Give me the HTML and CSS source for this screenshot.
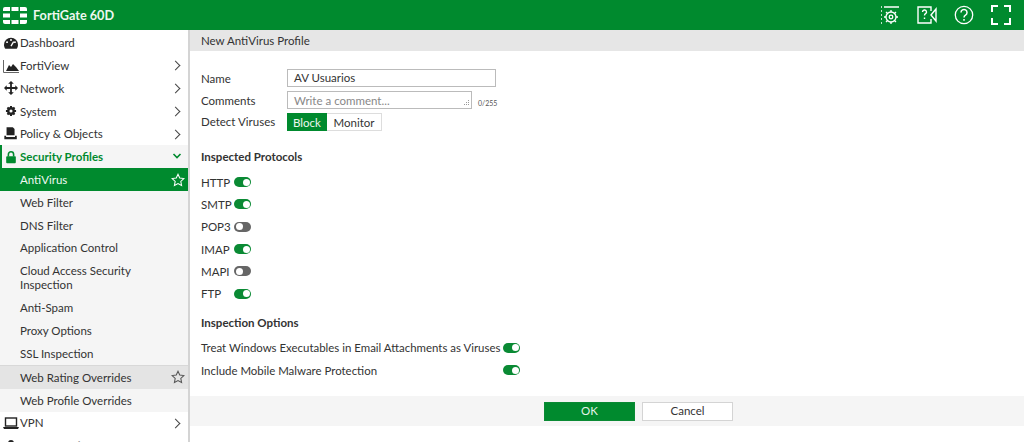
FILE: index.html
```html
<!DOCTYPE html>
<html lang="en">
<head>
<meta charset="utf-8">
<title>FortiGate 60D</title>
<link rel="stylesheet" href="styles.css">
</head>
<body>
<header class="topbar">
  <div class="brand">
    <svg class="logo" viewBox="0 0 24 17" width="24" height="17"><g fill="#fff"><path d="M7 0v4H0V2a2 2 0 0 1 2-2z"/><rect x="8.5" y="0" width="7" height="4"/><path d="M17 0h5a2 2 0 0 1 2 2v2h-7z"/><rect x="0" y="6.5" width="7" height="4"/><rect x="17" y="6.5" width="7" height="4"/><path d="M0 13h7v4H2a2 2 0 0 1-2-2z"/><rect x="8.5" y="13" width="7" height="4"/><path d="M17 13h7v2a2 2 0 0 1-2 2h-5z"/></g></svg>
    <span class="brand-name">FortiGate 60D</span>
  </div>
  <div class="top-icons">
    <svg viewBox="0 0 20 20" width="20" height="20" fill="none" stroke="#fff" stroke-width="1.3"><path d="M1 2h1M4 2h15M1 6h1M1 10h1M1 14h1M1 18h1"/><circle cx="11" cy="12" r="5"/><circle cx="11" cy="12" r="1.8"/><path d="M11 5v2M11 17v2M4 12h2M16 12h2M6 7l1.500 1.500M16 7l-1.500 1.500M6 17l1.500-1.500M16 17l-1.500-1.500"/></svg>
    <svg viewBox="0 0 20 20" width="20" height="20" fill="none" stroke="#fff" stroke-width="1.4"><path d="M14 6V2H1v16h13v-4"/><path d="M14 10l5-6v12z"/><path d="M5.500 7a2 2 0 1 1 3 1.700c-.8.500-1 .8-1 1.800M7.500 12.500v1.500"/></svg>
    <svg viewBox="0 0 20 20" width="20" height="20" fill="none" stroke="#fff" stroke-width="1.300"><circle cx="10" cy="10" r="8.700"/><path d="M7 7.500a3 3 0 1 1 4.500 2.600c-1 .6-1.500 1.100-1.500 2.400M10 14v1.800" stroke-width="1.500"/></svg>
    <svg viewBox="0 0 20 20" width="20" height="20" fill="none" stroke="#fff" stroke-width="2"><path d="M1 7V1h6M13 1h6v6M19 13v6h-6M7 19H1v-6"/></svg>
  </div>
</header>
<div class="shell">
  <nav class="sidebar">
    <a class="nav-row"><svg class="nav-icon" viewBox="-1 -1 18 16"><path fill="#222" d="M8 1a8 8 0 0 0-8 8c0 2 .6 3.500 1.500 4.500h13c.9-1 1.500-2.500 1.500-4.500a8 8 0 0 0-8-8z"/><circle cx="8" cy="3.500" r="1.100" fill="#fff"/><circle cx="3.500" cy="6" r="1.100" fill="#fff"/><circle cx="12.500" cy="6" r="1.100" fill="#fff"/><path stroke="#fff" stroke-width="1.500" d="M8 10.500l3-5"/></svg><span>Dashboard</span></a>
    <a class="nav-row has-arrow"><svg class="nav-icon" viewBox="0 0 16 14"><path fill="#222" d="M3 12l3-6 2 2 2-3 3 3 3 4z"/><path fill="none" stroke="#666" stroke-width="1" d="M.5 1v12.500H16"/></svg><span>FortiView</span></a>
    <a class="nav-row has-arrow"><svg class="nav-icon" viewBox="0 0 16 14"><path fill="#222" d="M8 0l2.800 2.800H8.900v3.300h3.400V4.200L15 7l-2.700 2.800V7.900H8.900v3.300h1.900L8 14l-2.800-2.800h1.900V7.900H3.700v1.900L1 7l2.700-2.800v1.900h3.400V2.800H5.200z"/></svg><span>Network</span></a>
    <a class="nav-row has-arrow"><svg class="nav-icon" viewBox="-2 -2 20 18"><circle cx="8" cy="7" r="3.500" fill="none" stroke="#222" stroke-width="3"/><path stroke="#222" stroke-width="2.600" d="M8 .500v3M8 10.500v3M1.500 7h3M11.500 7h3M3.400 2.400l2 2M10.600 9.600l2 2M3.400 11.600l2-2M10.600 4.400l2-2"/></svg><span>System</span></a>
    <a class="nav-row has-arrow"><svg class="nav-icon" viewBox="-1 0 18 15"><path fill="#222" d="M3 0h7l2 2v7H3z"/><path fill="#222" d="M.5 9.500h2V11h10V9.500h2v4H.5z"/></svg><span>Policy &amp; Objects</span></a>
    <a class="nav-row nav-open"><svg class="nav-icon" viewBox="-1 -1 18 16"><path fill="#008a2e" d="M3.500 6h9a1 1 0 0 1 1 1v6a1 1 0 0 1-1 1h-9a1 1 0 0 1-1-1V7a1 1 0 0 1 1-1z"/><path fill="none" stroke="#008a2e" stroke-width="1.800" d="M5 6.500V4a3 3 0 0 1 6 0v2.500"/></svg><span>Security Profiles</span><svg class="arrow" viewBox="0 0 10 10" width="10" height="10"><path d="M1.500 3l3.500 3.500L8.500 3" fill="none" stroke="#008a2e" stroke-width="1.600"/></svg></a>
    <a class="sub-row sub-active"><span>AntiVirus</span><svg class="star" viewBox="0 0 16 16" width="14" height="14"><path d="M8 1.500l2 4.300 4.700.6-3.500 3.200.9 4.700L8 12l-4.100 2.300.9-4.700L1.300 6.400 6 5.800z" fill="none" stroke="#fff" stroke-width="1.200"/></svg></a>
    <a class="sub-row"><span>Web Filter</span></a>
    <a class="sub-row"><span>DNS Filter</span></a>
    <a class="sub-row"><span>Application Control</span></a>
    <a class="sub-row sub-tall"><span>Cloud Access Security<br>Inspection</span></a>
    <a class="sub-row"><span>Anti-Spam</span></a>
    <a class="sub-row"><span>Proxy Options</span></a>
    <a class="sub-row"><span>SSL Inspection</span></a>
    <a class="sub-row sub-hover"><span>Web Rating Overrides</span><svg class="star" viewBox="0 0 16 16" width="14" height="14"><path d="M8 1.500l2 4.300 4.700.6-3.500 3.200.9 4.700L8 12l-4.100 2.300.9-4.700L1.300 6.400 6 5.800z" fill="none" stroke="#555" stroke-width="1.200"/></svg></a>
    <a class="sub-row"><span>Web Profile Overrides</span></a>
    <a class="nav-row has-arrow"><svg class="nav-icon" viewBox="0 0 16 14"><rect x="2.500" y="2" width="11" height="8" fill="none" stroke="#222" stroke-width="1.400"/><path fill="#222" d="M0 11h16l-1 2H1z"/></svg><span>VPN</span></a>
    <a class="nav-row nav-cut"><svg class="nav-icon" viewBox="0 0 16 14"><circle cx="8" cy="4" r="3" fill="#222"/><path fill="#222" d="M3 14c0-4 2-6 5-6s5 2 5 6z"/></svg><span>User &amp; Device</span></a>
  </nav>
  <main class="content">
    <h1 class="page-title">New AntiVirus Profile</h1>
    <form class="form">
      <div class="field name-row"><label>Name</label><div class="input name-input">AV Usuarios</div></div>
      <div class="field comment-row"><label>Comments</label><div class="input comment-input">Write a comment...<svg class="grip" viewBox="0 0 7 7" width="7" height="7"><path fill="#999" d="M5 0h1v1H5zM3 2h1v1H3zM5 2h1v1H5zM1 4h1v1H1zM3 4h1v1H3zM5 4h1v1H5z"/></svg></div><span class="counter">0/255</span></div>
      <div class="field detect-row"><label>Detect Viruses</label><div class="segmented"><span class="seg seg-on">Block</span><span class="seg">Monitor</span></div></div>
      <h2 class="section first-section">Inspected Protocols</h2>
      <div class="toggle-row"><span class="proto">HTTP</span><span class="toggle on"></span></div>
      <div class="toggle-row"><span class="proto">SMTP</span><span class="toggle on"></span></div>
      <div class="toggle-row"><span class="proto">POP3</span><span class="toggle off"></span></div>
      <div class="toggle-row"><span class="proto">IMAP</span><span class="toggle on"></span></div>
      <div class="toggle-row"><span class="proto">MAPI</span><span class="toggle off"></span></div>
      <div class="toggle-row"><span class="proto">FTP</span><span class="toggle on"></span></div>
      <h2 class="section second-section">Inspection Options</h2>
      <div class="toggle-row"><span class="option">Treat Windows Executables in Email Attachments as Viruses</span><span class="toggle on"></span></div>
      <div class="toggle-row"><span class="option">Include Mobile Malware Protection</span><span class="toggle on"></span></div>
    </form>
    <div class="footer-bar"><button class="btn btn-ok" type="button">OK</button><button class="btn btn-cancel" type="button">Cancel</button></div>
  </main>
</div>
</body>
</html>
```
FILE: styles.css
```css
* { box-sizing: border-box; }
html, body { margin: 0; height: 100%; overflow: hidden; }
body { font-family: Lato, "Open Sans", sans-serif; font-size: 11.5px; color: #333; background: #fff; }
.topbar { height: 30px; background: #008a2e; display: flex; align-items: center; justify-content: space-between; color: #fff; }
.brand { display: flex; align-items: center; padding-left: 3px; gap: 6px; }
.brand-name { font-size: 12.7px; font-weight: 700; color: #eef7f0; }
.top-icons { display: flex; gap: 17px; padding-right: 13px; }
.shell { display: flex; height: 412px; }
.sidebar { width: 190px; flex: none; border-right: 2px solid #d4d4d4; padding-top: 1.400px; overflow: hidden; }
.nav-row, .sub-row { display: flex; align-items: center; height: 22.8px; position: relative; color: #333; }
.nav-row { padding-left: 3px; }
.nav-icon { width: 16px; height: 14px; margin-right: 1px; flex: none; }
.has-arrow::after { content: ""; position: absolute; right: 9px; top: 8px; width: 6px; height: 6px; border-top: 1.500px solid #444; border-right: 1.500px solid #444; transform: rotate(45deg); }
.nav-open { background: #f5f5f5; color: #008a2e; font-weight: 700; border-left: 2px solid #008a2e; padding-left: 1px; }
.arrow { position: absolute; right: 6px; top: 6px; }
.sub-row { padding-left: 20px; background: #f5f5f5; justify-content: space-between; padding-right: 3px; }
.sub-active { background: #008a2e; color: #f0f8f2; }
.sub-hover { background: #e4e4e4; height: 24px; border-top: 1px solid #d8d8d8; }
.sub-tall { height: 37px; line-height: 14px; }
.nav-cut span { color: #999; }
.content { flex: 1; display: flex; flex-direction: column; }
.page-title { margin: 0; height: 21px; background: #e6e6e6; font-size: 11.5px; font-weight: 400; padding-left: 11px; line-height: 21px; color: #333; }
.form { height: 345px; padding: 17px 0 0 11px; }
.field { display: flex; align-items: center; }
.field label { width: 86px; flex: none; }
.input { border: 1px solid #bbb; display: flex; align-items: center; padding-left: 6px; height: 18px; position: relative; }
.name-row { height: 19px; }
.name-row label { padding-top: 2px; }
.name-input { width: 209px; color: #333; }
.comment-row { height: 18px; margin-top: 4px; }
.comment-input { width: 185px; color: #888; }
.grip { position: absolute; right: 1px; bottom: 1px; }
.counter { font-size: 7px; margin-left: 6px; margin-top: 6px; color: #555; }
.detect-row { height: 18px; margin-top: 4px; }
.detect-row label { padding-bottom: 2px; }
.segmented { display: flex; height: 18px; border: 1px solid #ddd; }
.seg { display: flex; align-items: center; color: #333; height: 16px; width: 54px; justify-content: center; }
.seg-on { background: #008a2e; color: #eef7f0; width: 40px; height: 18px; margin: -1px 0 -1px -1px; }
.section { margin: 0; font-size: 11.5px; font-weight: 700; color: #333; line-height: 14px; }
.first-section { margin-top: 19px; margin-bottom: 7px; }
.second-section { margin-top: 11px; margin-bottom: 7px; }
.toggle-row { display: flex; align-items: center; height: 22.300px; }
.proto { width: 33px; flex: none; }
.option { width: 302px; flex: none; white-space: nowrap; font-size: 11.45px; }
.toggle { width: 17px; height: 10px; border-radius: 5px; position: relative; flex: none; }
.toggle::after { content: ""; position: absolute; top: 1.500px; width: 7px; height: 7px; border-radius: 50%; background: #fff; }
.toggle.on { background: #0a8a34; }
.toggle.on::after { right: 1.500px; }
.toggle.off { background: #666; }
.toggle.off::after { left: 1.500px; }
.footer-bar { height: 30px; background: #f5f5f5; display: flex; align-items: center; gap: 7px; padding-left: 354px; }
.btn { width: 91px; height: 19px; font: inherit; padding: 0 0 2px; border-radius: 0; }
.btn-ok { background: #008a2e; border: 1px solid #0a8a34; color: #e6f4ea; }
.btn-cancel { background: #fff; border: 1px solid #d4d4d4; color: #333; }
```
